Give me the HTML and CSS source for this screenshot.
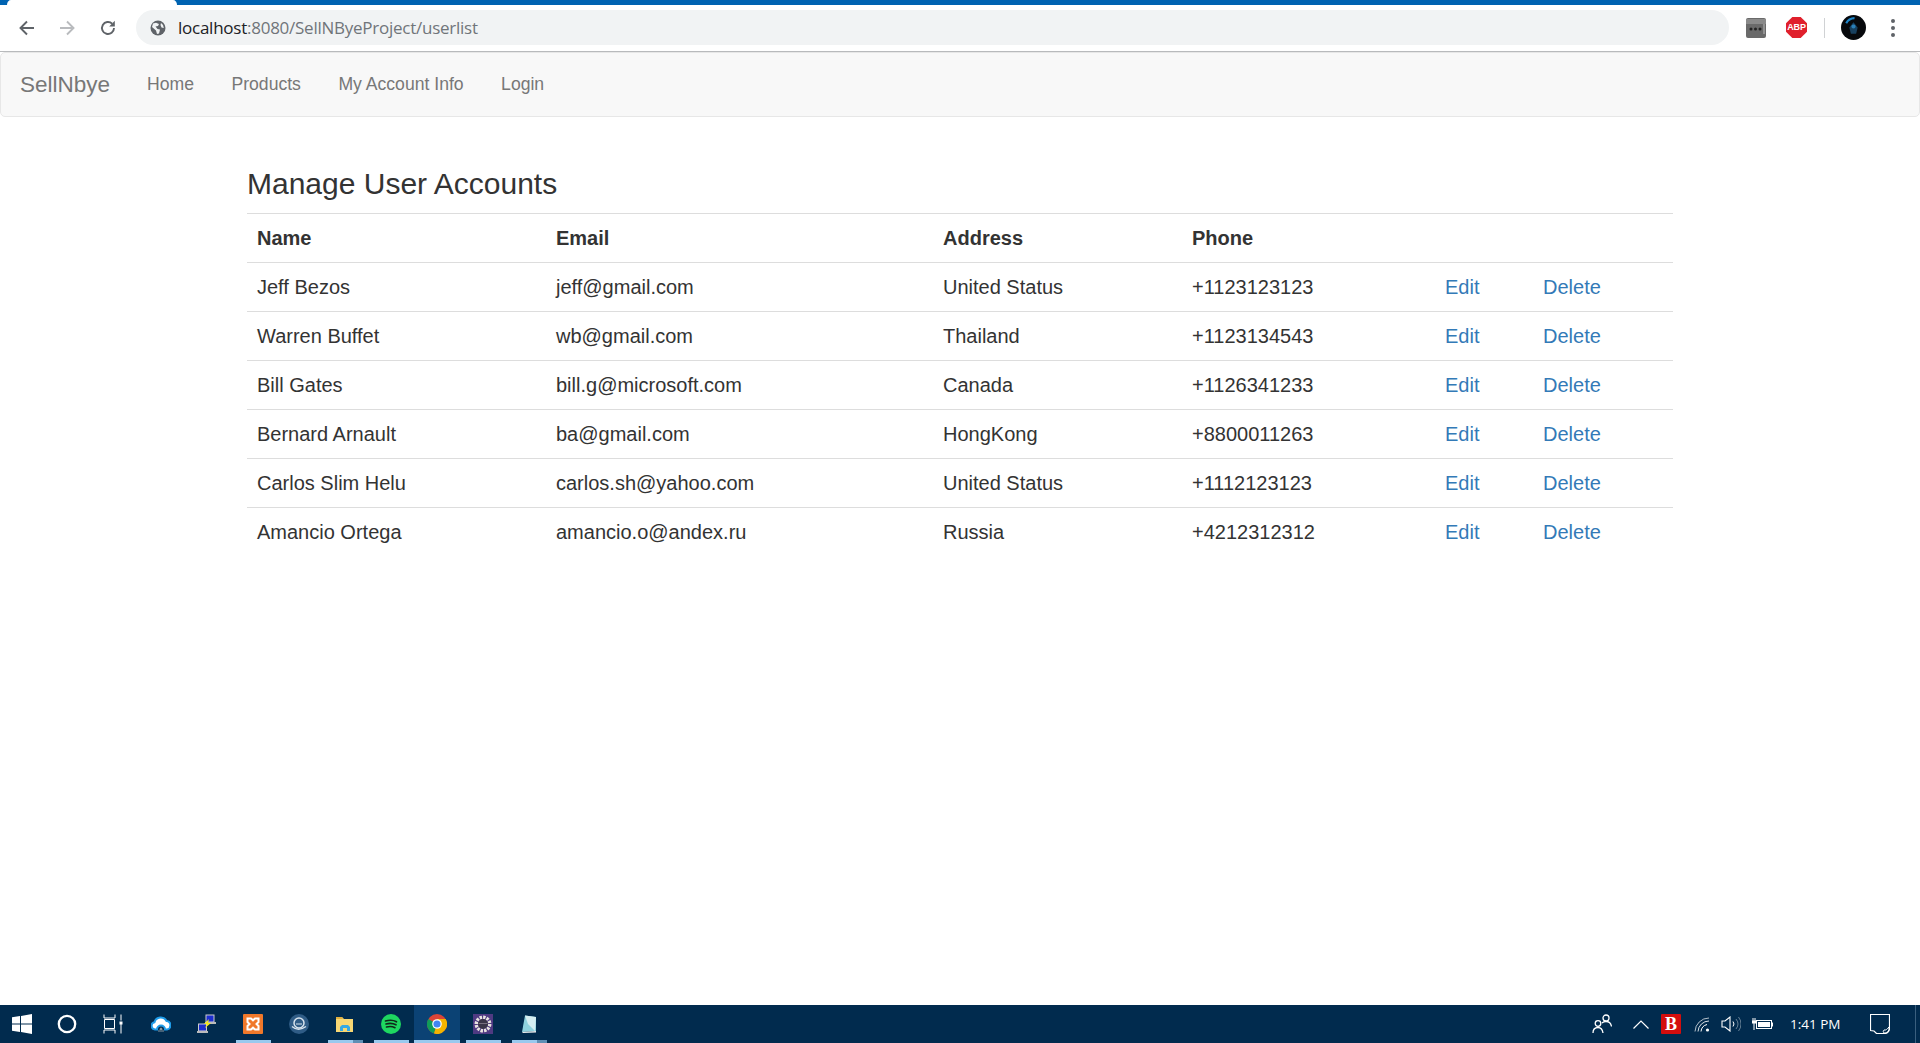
FILE: index.html
```html
<!DOCTYPE html>
<html>
    <head>
        <title>Manage User Accounts</title>
        <link rel="stylesheet" href="styles.css">
    </head>
    <body>
        <div class="tab_strip"><div class="tab_strip_active"></div></div>
        <div class="toolbar">
            <svg class="tool_icon" viewBox="0 0 18 18"><path d="M16 9H3M9 2.500 2.500 9 9 15.500" fill="none" stroke="#5f6368" stroke-width="1.900"/></svg>
            <svg class="tool_icon" viewBox="0 0 18 18"><path d="M2 9h13M9 2.500 15.500 9 9 15.500" fill="none" stroke="#b9bbbe" stroke-width="1.900"/></svg>
            <svg class="tool_icon" viewBox="0 0 18 18"><path d="M15 9a6 6 0 1 1-1.800-4.300" fill="none" stroke="#5f6368" stroke-width="1.900"/><path d="M15.800 1.800v5.600h-5.600z" fill="#5f6368"/></svg>
            <div class="address_bar">
                <svg class="globe" viewBox="0 0 16 16"><circle cx="8" cy="8" r="7.500" fill="#5f6368"/><path d="M3 3.500 6 2.800 9 4 8 6 5.500 6.500 7.500 9 10 9.500 9 13.500 7 14 6 10.500 2 7zM11 3l2 2 .8 3-2.300-.5-1-2.500z" fill="#f1f3f4"/></svg>
                <span class="url_host">localhost</span><span class="url_rest">:8080/SellNByeProject/userlist</span>
            </div>
            <div class="extensions">
                <svg class="ext_more" viewBox="0 0 20 20"><rect width="20" height="20" rx="2" fill="#6a6a6a"/><rect y="1" width="20" height="5" fill="#8a8a8a"/><circle cx="5" cy="11" r="1.500" fill="#222"/><circle cx="9.500" cy="11" r="1.500" fill="#222"/><circle cx="14" cy="11" r="1.500" fill="#222"/><rect x="17.500" y="6" width="1" height="10" fill="#bbb"/></svg>
                <div class="ext_abp">ABP</div>
                <div class="ext_sep"></div>
                <svg class="avatar" viewBox="0 0 24 24"><circle cx="12" cy="12" r="12" fill="#07090c"/><path d="M5 8a9 9 0 0 1 8-5" fill="none" stroke="#1f86c9" stroke-width="2"/><path d="M12 7l4 5-1.500 6h-5L8 12z" fill="#17405f"/><circle cx="12" cy="11" r="2" fill="#2a7fb8"/></svg>
                <div class="menu_dots"><i></i><i></i><i></i></div>
            </div>
        </div>

        <div class="navbar">
            <a class="navbar_brand">SellNbye</a>
            <a class="nav_link">Home</a>
            <a class="nav_link">Products</a>
            <a class="nav_link">My Account Info</a>
            <a class="nav_link">Login</a>
        </div>

        <div class="container">
            <h3 class="page_title">Manage User Accounts</h3>
            <table class="user_table">
                <colgroup>
                    <col class="col_name"><col class="col_email"><col class="col_address"><col class="col_phone"><col class="col_edit"><col>
                </colgroup>
                <tr><th>Name</th><th>Email</th><th>Address</th><th>Phone</th><th></th><th></th></tr>
                <tr><td>Jeff Bezos</td><td>jeff@gmail.com</td><td>United Status</td><td>+1123123123</td><td><a>Edit</a></td><td><a>Delete</a></td></tr>
                <tr><td>Warren Buffet</td><td>wb@gmail.com</td><td>Thailand</td><td>+1123134543</td><td><a>Edit</a></td><td><a>Delete</a></td></tr>
                <tr><td>Bill Gates</td><td>bill.g@microsoft.com</td><td>Canada</td><td>+1126341233</td><td><a>Edit</a></td><td><a>Delete</a></td></tr>
                <tr><td>Bernard Arnault</td><td>ba@gmail.com</td><td>HongKong</td><td>+8800011263</td><td><a>Edit</a></td><td><a>Delete</a></td></tr>
                <tr><td>Carlos Slim Helu</td><td>carlos.sh@yahoo.com</td><td>United Status</td><td>+1112123123</td><td><a>Edit</a></td><td><a>Delete</a></td></tr>
                <tr><td>Amancio Ortega</td><td>amancio.o@andex.ru</td><td>Russia</td><td>+4212312312</td><td><a>Edit</a></td><td><a>Delete</a></td></tr>
            </table>
        </div>

        <div class="taskbar">
            <div class="task_item task_start"><svg viewBox="0 0 20 20" width="20" height="20"><path d="M0 3.200 8 2v7.500H0zM9 1.900 20 0v9.500H9zM0 10.500h8V18L0 16.800zM9 10.500h11V20L9 18.100z" fill="#fff"/></svg></div>
            <div class="task_item"><svg viewBox="0 0 20 20" width="20" height="20"><circle cx="10" cy="10" r="8.200" fill="none" stroke="#fff" stroke-width="2.300"/></svg></div>
            <div class="task_item"><svg viewBox="0 0 20 20" width="20" height="20"><path d="M1 .5v3.500h11V.5M1.500 5.500h10v9h-10zM1 19.500V16h11v3.500M18 .5v6M18 10v9.500" fill="none" stroke="#fff"/><rect x="16.500" y="7.500" width="3" height="3" fill="#fff"/></svg></div>
            <div class="task_item task_gap"><svg viewBox="0 0 20 20" width="20" height="20"><path d="M4 15.500a3.700 3.700 0 0 1-.5-7.300A6.500 6.500 0 0 1 15.500 7a4.300 4.300 0 0 1 .5 8.500h-2a4 4 0 0 0-8 0z" fill="#fff" stroke="#1e9be8" stroke-width="2"/><path d="M8.500 16a1.500 2.500 0 0 1 3 0zM7 16.500h6v1H7z" fill="#8a979f"/></svg></div>
            <div class="task_item"><svg viewBox="0 0 20 20" width="20" height="20"><rect x="9" y="1" width="8" height="7" fill="#1c2fd0" stroke="#ccc"/><rect x="8" y="8" width="11" height="2" fill="#bbb"/><rect x="1.500" y="10" width="8" height="7" fill="#1c2fd0" stroke="#ccc"/><rect x="0" y="17" width="11" height="2" fill="#bbb"/><path d="M12 5 7 10h3l-2 4 6-5h-3z" fill="#f4e91c"/></svg></div>
            <div class="task_item task_open"><svg viewBox="0 0 20 20" width="20" height="20"><rect width="20" height="20" rx="1" fill="#f0782a"/><path d="M4.500 4.500h3.500l2 1.800 2-1.800h3.500v3.500l-2 2 2 2v3.500H12l-2-1.800-2 1.800H4.500V12l2-2-2-2z" fill="none" stroke="#fff" stroke-width="2"/></svg></div>
            <div class="task_item"><svg viewBox="0 0 20 20" width="20" height="20"><circle cx="10" cy="10" r="10" fill="#2f5c86"/><circle cx="10" cy="9" r="5" fill="none" stroke="#d8e4ee" stroke-width="1.500"/><path d="M3 12.500c4 3.500 9 3.500 14 0" fill="none" stroke="#d8e4ee" stroke-width="1.500"/><path d="M7 10h6" stroke="#d8e4ee"/></svg></div>
            <div class="task_item task_open task_more"><svg viewBox="0 0 20 20" width="20" height="20"><path d="M1 3h6l2 2h9v13H1z" fill="#f7d774"/><path d="M1 3h6l1 2H1z" fill="#e0b040"/><path d="M5 17v-4l2-2h6l2 2v4h-3v-3H8v3z" fill="#35a9e6"/></svg></div>
            <div class="task_item task_open"><svg viewBox="0 0 20 20" width="20" height="20"><circle cx="10" cy="10" r="10" fill="#1ed760"/><path d="M4.500 7c4-1.200 8-1 11 .8M5 10c3.500-1 7-.8 10 .8M5.500 13c3-.8 6-.6 8.500.7" fill="none" stroke="#10281a" stroke-width="1.600" stroke-linecap="round"/></svg></div>
            <div class="task_item task_open task_active"><svg viewBox="0 0 20 20" width="20" height="20"><circle cx="10" cy="10" r="10" fill="#db4437"/><path d="M10 10 1.300 5A10 10 0 0 0 7 19.500z" fill="#0f9d58"/><path d="M10 5h8.700A10 10 0 0 1 7 19.500L10 10z" fill="#f4b400"/><circle cx="10" cy="10" r="4.800" fill="#fff"/><circle cx="10" cy="10" r="3.600" fill="#4285f4"/></svg></div>
            <div class="task_item task_open"><svg viewBox="0 0 20 20" width="20" height="20"><rect width="20" height="20" fill="#4f3a82"/><circle cx="10" cy="10" r="6.700" fill="none" stroke="#e8e4e0" stroke-width="3.500" stroke-dasharray="2.400 1.100"/><circle cx="10" cy="10" r="5" fill="#3a3548"/><path d="M5.500 9.500h9" stroke="#77707f"/></svg></div>
            <div class="task_item task_open task_more"><svg viewBox="0 0 20 20" width="20" height="20"><path d="M6 1.500 17 3v14L3 18z" fill="#8fd2de"/><path d="M6 1.500 17 3 16 17 9 10z" fill="#d5eef2"/><path d="M3 18l14-1v1.500L4 19z" fill="#eee"/></svg></div>

            <div class="tray">
                <svg class="tray_people" viewBox="0 0 20 20" width="20" height="20"><g fill="none" stroke="#fff" stroke-width="1.300"><circle cx="6" cy="9.500" r="2.800"/><path d="M1 19c0-3.500 2-5.500 5-5.500s4.500 2 5 5.500"/><circle cx="14" cy="4" r="3"/><path d="M10 9c1-1 2.500-1.500 4-1.500 3 0 5 2 5.500 5"/></g></svg>
                <svg class="tray_chevron" viewBox="0 0 16 9" width="16" height="9"><path d="M.5 8.500 8 1l7.500 7.500" fill="none" stroke="#fff" stroke-width="1.200"/></svg>
                <div class="tray_badge">B</div>
                <svg class="tray_wifi" viewBox="0 0 16 16" width="16" height="16"><g fill="none" stroke="#fff"><path d="M1 15.500A14 14 0 0 1 15 2" stroke-opacity=".7"/><path d="M4 15.500A11 11 0 0 1 15 5" stroke-opacity=".85"/><path d="M7 15.500A8 8 0 0 1 13 8.500"/></g><circle cx="13.500" cy="14" r="1.600" fill="#fff"/></svg>
                <svg class="tray_speaker" viewBox="0 0 20 16" width="20" height="16"><path d="M1 5h3l5-4v14l-5-4H1z" fill="none" stroke="#fff" stroke-width="1.100"/><path d="M12 5.500a4 4 0 0 1 0 5" fill="none" stroke="#fff"/><path d="M15 3a8 8 0 0 1 0 10M17.500 1a11 11 0 0 1 0 14" fill="none" stroke="#fff" stroke-opacity=".4"/></svg>
                <svg class="tray_battery" viewBox="0 0 21 12" width="21" height="12"><rect x="4.500" y="2.500" width="15" height="8" fill="none" stroke="#fff"/><rect x="6" y="4" width="12" height="5" fill="#fff"/><rect x="20" y="4.500" width="1" height="4" fill="#fff"/><path d="M1 0v3M3 0v3M0 3h4v2H0zM2 5v7" stroke="#fff" fill="#fff"/></svg>
                <div class="tray_clock">1:41 PM</div>
                <svg class="tray_notify" viewBox="0 0 20 20" width="20" height="20"><path d="M.5 .5h19v13.500a5 5 0 0 1-5 5.500H6.500l-2.500-2.500-3.500-.5z" fill="none" stroke="#fff" stroke-width="1.200"/><path d="M19 13a4 5 0 0 1-5 6c-1-1-1-2 0-3 2 .5 3-1 5-3z" fill="none" stroke="#fff"/></svg>
                <div class="tray_edge"></div>
            </div>
        </div>
    </body>
</html>
```

FILE: styles.css
```css
html, body {
    height: 100%;
}

body {
    margin: 0;
    display: flex;
    flex-direction: column;
    background: #fff;
    color: #333;
    font-family: "Liberation Sans", Arial, sans-serif;
    overflow: hidden;
}

/* browser chrome */

.tab_strip {
    height: 5px;
    background: #0063b1;
}

.tab_strip_active {
    width: 170px;
    height: 5px;
    margin-left: 7px;
    background: #fff;
    border-radius: 4px 4px 0 0 / 5px 5px 0 0;
}

.toolbar {
    height: 45px;
    display: flex;
    align-items: center;
    padding: 0 0 1px 18px;
    border-bottom: 1px solid #b8babc;
}

.tool_icon {
    width: 18px;
    height: 18px;
    margin-right: 22px;
}

.tool_icon:nth-child(3) {
    margin-right: 19px;
    margin-left: 1px;
}

.address_bar {
    width: 1593px;
    height: 35px;
    display: flex;
    align-items: center;
    box-sizing: border-box;
    padding-left: 14px;
    background: #f1f3f4;
    border-radius: 18px;
    font-family: "Open Sans", sans-serif;
    font-size: 17px;
    letter-spacing: -0.25px;
}

.globe {
    width: 16px;
    height: 16px;
    margin-right: 12px;
}

.url_host {
    color: #202124;
}

.url_rest {
    color: #70757a;
}

.extensions {
    display: flex;
    align-items: center;
    padding-left: 17px;
}

.ext_more {
    width: 20px;
    height: 20px;
    margin-right: 20px;
}

.ext_abp {
    width: 21px;
    height: 21px;
    background: #e0202c;
    clip-path: polygon(30% 0, 70% 0, 100% 30%, 100% 70%, 70% 100%, 30% 100%, 0 70%, 0 30%);
    color: #fff;
    font-size: 9px;
    font-weight: bold;
    letter-spacing: -0.2px;
    line-height: 21px;
    text-align: center;
    margin-right: 17px;
}

.ext_sep {
    width: 1px;
    height: 20px;
    background: #d0d2d4;
    margin-right: 16px;
}

.avatar {
    width: 25px;
    height: 25px;
    margin-right: 25px;
}

.menu_dots {
    display: flex;
    flex-direction: column;
    gap: 3px;
}

.menu_dots i {
    display: block;
    width: 4px;
    height: 4px;
    border-radius: 50%;
    background: #5f6368;
}

/* page */

.navbar {
    height: 63px;
    display: flex;
    align-items: center;
    padding-left: 19px;
    background: #f8f8f8;
    border: 1px solid #e7e7e7;
    border-radius: 5px;
    color: #777;
    font-size: 17.6px;
}

.navbar_brand {
    font-size: 22.5px;
    margin-right: 37px;
}

.nav_link {
    margin-right: 37.500px;
}

.container {
    flex: 1;
    padding: 49px 247px 0;
}

.page_title {
    margin: 0 0 11px;
    font-size: 30px;
    font-weight: 500;
    line-height: 36px;
}

.user_table {
    width: 100%;
    table-layout: fixed;
    border-collapse: collapse;
    font-size: 20px;
    line-height: 28px;
}

.col_name {
    width: 299px;
}

.col_email {
    width: 387px;
}

.col_address {
    width: 249px;
}

.col_phone {
    width: 253px;
}

.col_edit {
    width: 98px;
}

.user_table th,
.user_table td {
    height: 48px;
    padding: 0 10px;
    border-top: 1px solid #ddd;
    text-align: left;
}

.user_table a {
    color: #337ab7;
}

/* windows taskbar */

.taskbar {
    height: 38px;
    display: flex;
    background: #012b4e;
    color: #fff;
}

.task_item {
    width: 46px;
    height: 38px;
    display: flex;
    align-items: center;
    justify-content: center;
}

.task_start {
    width: 44px;
}

.task_gap {
    margin-left: 2px;
}

.task_open {
    background: linear-gradient(#99c9ee, #99c9ee) center bottom / 35px 3px no-repeat;
}

.task_more {
    background: linear-gradient(to right, #99c9ee 71%, #5f8fb5 71%) center bottom / 35px 3px no-repeat;
}

.task_active {
    background: linear-gradient(#99c9ee, #99c9ee) center bottom / 100% 3px no-repeat, #0b4274;
}

.tray {
    flex: 1;
    display: flex;
    align-items: center;
    justify-content: flex-end;
}

.tray_people {
    margin-right: 21px;
}

.tray_chevron {
    margin-right: 12px;
}

.tray_badge {
    width: 20px;
    height: 20px;
    margin-right: 13px;
    background: #d40d0d;
    border-radius: 1px;
    font-family: "Liberation Serif", serif;
    font-size: 18px;
    font-weight: bold;
    line-height: 20px;
    text-align: center;
}

.tray_wifi {
    margin-right: 11px;
}

.tray_speaker {
    margin-right: 11px;
}

.tray_battery {
    margin-right: 17px;
}

.tray_clock {
    width: 52px;
    margin-right: 28px;
    font-family: "Open Sans", sans-serif;
    font-size: 13.500px;
    white-space: nowrap;
}

.tray_notify {
    margin-right: 25px;
}

.tray_edge {
    width: 1px;
    height: 38px;
    margin-right: 4px;
    background: #3a5f7e;
}
```
